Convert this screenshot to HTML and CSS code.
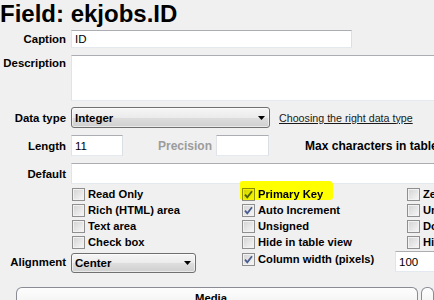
FILE: index.html
```html
<!DOCTYPE html>
<html>
<head>
<meta charset="utf-8">
<link rel="stylesheet" href="styles.css">
</head>
<body>
<div class="page">
  <h1 class="title">Field: ekjobs.ID</h1>

  <div class="row r-caption">
    <label class="lbl">Caption</label>
    <div class="field caption-in">ID</div>
  </div>

  <div class="row r-desc">
    <label class="lbl">Description</label>
    <div class="field desc-in"></div>
  </div>

  <div class="row r-type">
    <label class="lbl">Data type</label>
    <div class="select type-sel"><span>Integer</span><svg class="arrow" width="7" height="4" viewBox="0 0 7 4"><polygon points="0,0 7,0 3.5,4" fill="#000"/></svg></div>
    <a class="link" href="#">Choosing the right data type</a>
  </div>

  <div class="row r-len">
    <label class="lbl">Length</label>
    <div class="field len-in">11</div>
    <span class="sublbl prec">Precision</span>
    <div class="field prec-in"></div>
    <span class="sublbl max">Max characters in table</span>
  </div>

  <div class="row r-def">
    <label class="lbl">Default</label>
    <div class="field def-in"></div>
  </div>

  <div class="opts">
    <div class="chk g1"><span class="box"></span>Read Only</div>
    <div class="chk g2 hl"><span class="box"><svg class="tick" width="11" height="11" viewBox="0 0 11 11"><path d="M2 5.6 L4.3 8.4 L9 2.2" fill="none" stroke="#4a5d8f" stroke-width="1.8"/></svg></span>Primary Key</div>
    <div class="chk g3"><span class="box"></span>Zerofill</div>

    <div class="chk g1"><span class="box"></span>Rich (HTML) area</div>
    <div class="chk g2"><span class="box"><svg class="tick" width="11" height="11" viewBox="0 0 11 11"><path d="M2 5.6 L4.3 8.4 L9 2.2" fill="none" stroke="#4a5d8f" stroke-width="1.8"/></svg></span>Auto Increment</div>
    <div class="chk g3"><span class="box"></span>Unique</div>

    <div class="chk g1"><span class="box"></span>Text area</div>
    <div class="chk g2"><span class="box"></span>Unsigned</div>
    <div class="chk g3"><span class="box"></span>Do not export</div>

    <div class="chk g1"><span class="box"></span>Check box</div>
    <div class="chk g2"><span class="box"></span>Hide in table view</div>
    <div class="chk g3"><span class="box"></span>Hidden</div>

    <label class="lbl g0 align-lbl">Alignment</label>
    <div class="select g1 align-sel"><span>Center</span><svg class="arrow" width="7" height="4" viewBox="0 0 7 4"><polygon points="0,0 7,0 3.5,4" fill="#000"/></svg></div>
    <div class="chk g2 colw"><span class="box"><svg class="tick" width="11" height="11" viewBox="0 0 11 11"><path d="M2 5.6 L4.3 8.4 L9 2.2" fill="none" stroke="#4a5d8f" stroke-width="1.8"/></svg></span>Column width (pixels)</div>
    <div class="field g3 colw-in">100</div>
  </div>

  <div class="tabs">
    <div class="tab tab-main">Media</div>
    <div class="tab tab-next"></div>
  </div>
</div>
</body>
</html>
```
FILE: styles.css
```css
* { box-sizing: border-box; }
html, body {
  margin: 0;
  width: 434px;
  height: 300px;
  overflow: hidden;
  background: #f0f0f0;
}
body {
  font-family: "Liberation Sans", Arial, sans-serif;
  color: #000;
}
.page { width: 434px; overflow: hidden; height: 300px; }
.title {
  margin: 0;
  font-size: 24px;
  line-height: 27px;
  height: 27px;
  font-weight: bold;
  white-space: nowrap;
}
.row {
  display: flex;
  align-items: center;
  white-space: nowrap;
}
.row > * { flex: none; }
.lbl {
  width: 71px;
  padding-right: 5px;
  text-align: right;
  font-weight: bold;
  font-size: 11.4px;
  line-height: 14px;
  white-space: nowrap;
}
.field {
  flex: none;
  display: flex;
  align-items: center;
  background: #fff;
  border: 1px solid;
  border-color: #abadb3 #dbdfe6 #e3e9ef #e2e3ea;
  padding: 0 3px;
  font-size: 11.5px;
}
.r-caption { margin-top: 3px; height: 18px; }
.caption-in { width: 281px; height: 18px; }
.r-desc { margin-top: 7px; align-items: flex-start; }
.r-desc .lbl { padding-top: 1px; }
.desc-in { width: 400px; height: 46px; }
.r-type { margin-top: 6px; height: 21px; }
.select {
  display: flex;
  align-items: center;
  justify-content: space-between;
  height: 21px;
  border: 1px solid #707070;
  border-radius: 3px;
  padding: 0 4px 0 3px;
  background: linear-gradient(#f6f6f6, #ebebeb 50%, #dedede 51%, #cfcfcf);
  box-shadow: inset 0 0 0 1px rgba(255, 255, 255, 0.55);
  font-weight: bold;
  font-size: 11.5px;
}
.arrow { display: block; }
.type-sel { width: 199px; }
.link {
  margin-left: 9px;
  font-size: 10.7px;
  color: #1a1a1a;
  text-decoration: underline;
}
.r-len { margin-top: 7px; height: 21px; }
.len-in { width: 52px; height: 21px; }
.sublbl { font-weight: bold; font-size: 12px; }
.prec { margin-left: 35px; color: #9c9c9c; }
.prec-in { margin-left: 4px; width: 53px; height: 21px; }
.max { margin-left: 36px; }
.r-def { margin-top: 7px; height: 21px; }
.def-in { width: 400px; height: 21px; }

.opts {
  display: grid;
  grid-template-columns: 71px 171px 153px 39px;
  grid-template-rows: repeat(4, 16px) 23px;
  margin-top: 2px;
}
.g0 { grid-column: 1; }
.g1 { grid-column: 2; }
.g2 { grid-column: 3; }
.g3 { grid-column: 4; }
.chk {
  display: flex;
  align-items: center;
  gap: 3px;
  height: 16px;
  font-weight: bold;
  font-size: 11.2px;
  line-height: 16px;
  white-space: nowrap;
}
.chk.g1 { margin-left: 1px; }
.chk.g3 { margin-left: 12px; }
.box {
  flex: none;
  width: 13px;
  height: 13px;
  border: 1px solid #8f8f8f;
  background: linear-gradient(135deg, #d2d2d2, #f8f8f8);
  box-shadow: inset 0 0 0 1px #f2f2f2;
}
.tick { display: block; }
.hl { position: relative; z-index: 0; }
.hl::before {
  content: "";
  position: absolute;
  left: -2px;
  top: -5px;
  width: 93px;
  height: 19px;
  background: #ffff00;
  border-radius: 2px 4px 3px 2px;
  z-index: -1;
}
.hl .box { mix-blend-mode: multiply; }
.align-lbl { align-self: start; margin-top: 5px; }
.align-sel { align-self: start; margin-top: 3px; height: 20px; width: 125px; }
.colw { align-self: start; margin-top: 1px; }
.colw-in { align-self: start; margin-top: 1px; height: 21px; width: 60px; }

.tabs {
  display: flex;
  gap: 3px;
  margin-top: 14px;
  padding-left: 16px;
}
.tab {
  height: 30px;
  border: 1px solid #898c95;
  border-bottom: none;
  border-radius: 6px 6px 0 0;
  background: linear-gradient(#fdfdfd, #ececec);
}
.tab-main {
  width: 402px;
  flex: none;
  text-align: center;
  padding: 3px 12px 0 0;
  font-weight: bold;
  font-size: 11.3px;
  line-height: 14px;
}
.tab-next { flex: 1; }
```
